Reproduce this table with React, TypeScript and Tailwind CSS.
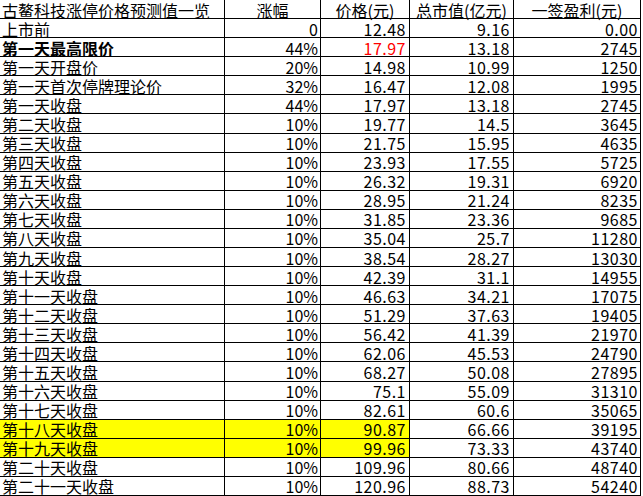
import React from "react";

type Row = {
  name: string;
  pct: string;
  price: string;
  cap: string;
  profit: string;
  bold?: boolean;
  red?: boolean;
  yellow?: boolean;
};

const rows: Row[] = [
  { name: "上市前", pct: "0", price: "12.48", cap: "9.16", profit: "0.00" },
  { name: "第一天最高限价", pct: "44%", price: "17.97", cap: "13.18", profit: "2745", bold: true, red: true },
  { name: "第一天开盘价", pct: "20%", price: "14.98", cap: "10.99", profit: "1250" },
  { name: "第一天首次停牌理论价", pct: "32%", price: "16.47", cap: "12.08", profit: "1995" },
  { name: "第一天收盘", pct: "44%", price: "17.97", cap: "13.18", profit: "2745" },
  { name: "第二天收盘", pct: "10%", price: "19.77", cap: "14.5", profit: "3645" },
  { name: "第三天收盘", pct: "10%", price: "21.75", cap: "15.95", profit: "4635" },
  { name: "第四天收盘", pct: "10%", price: "23.93", cap: "17.55", profit: "5725" },
  { name: "第五天收盘", pct: "10%", price: "26.32", cap: "19.31", profit: "6920" },
  { name: "第六天收盘", pct: "10%", price: "28.95", cap: "21.24", profit: "8235" },
  { name: "第七天收盘", pct: "10%", price: "31.85", cap: "23.36", profit: "9685" },
  { name: "第八天收盘", pct: "10%", price: "35.04", cap: "25.7", profit: "11280" },
  { name: "第九天收盘", pct: "10%", price: "38.54", cap: "28.27", profit: "13030" },
  { name: "第十天收盘", pct: "10%", price: "42.39", cap: "31.1", profit: "14955" },
  { name: "第十一天收盘", pct: "10%", price: "46.63", cap: "34.21", profit: "17075" },
  { name: "第十二天收盘", pct: "10%", price: "51.29", cap: "37.63", profit: "19405" },
  { name: "第十三天收盘", pct: "10%", price: "56.42", cap: "41.39", profit: "21970" },
  { name: "第十四天收盘", pct: "10%", price: "62.06", cap: "45.53", profit: "24790" },
  { name: "第十五天收盘", pct: "10%", price: "68.27", cap: "50.08", profit: "27895" },
  { name: "第十六天收盘", pct: "10%", price: "75.1", cap: "55.09", profit: "31310" },
  { name: "第十七天收盘", pct: "10%", price: "82.61", cap: "60.6", profit: "35065" },
  { name: "第十八天收盘", pct: "10%", price: "90.87", cap: "66.66", profit: "39195", yellow: true },
  { name: "第十九天收盘", pct: "10%", price: "99.96", cap: "73.33", profit: "43740", yellow: true },
  { name: "第二十天收盘", pct: "10%", price: "109.96", cap: "80.66", profit: "48740" },
  { name: "第二十一天收盘", pct: "10%", price: "120.96", cap: "88.73", profit: "54240" },
];

const font = { fontFamily: '"Noto Sans CJK SC", "Noto Sans", sans-serif' };

export default function App() {
  return (
    <div className="w-[643px] h-[496px] bg-white overflow-hidden text-black" style={font}>
      <div className="grid grid-cols-[225px_96px_89px_104px_127px] auto-rows-[19.08px] text-[16px] leading-[16px]">
        <div className="border-b border-r border-black pl-[2px] pt-[1px] flex items-center whitespace-nowrap">古鳌科技涨停价格预测值一览</div>
        <div className="border-b border-r border-black pt-[1px] flex items-center justify-center">涨幅</div>
        <div className="border-b border-r border-black pt-[1px] flex items-center justify-center">价格(元)</div>
        <div className="border-b border-r border-black pt-[1px] flex items-center justify-center">总市值(亿元)</div>
        <div className="border-b border-r border-black pt-[1px] flex items-center justify-center">一签盈利(元)</div>
        {rows.map((r, i) => (
          <React.Fragment key={i}>
            <div
              className={
                "border-b border-r border-black pl-[2px] pt-[1px] flex items-center whitespace-nowrap " +
                (r.yellow ? "bg-[#ffff00] " : "") +
                (r.bold ? "font-bold" : "")
              }
            >
              {r.name}
            </div>
            <div className={"border-b border-r border-black pr-[2px] pt-[1px] flex items-center justify-end " + (r.yellow ? "bg-[#ffff00]" : "")}>
              {r.pct}
            </div>
            <div
              className={
                "border-b border-r border-black pr-[3px] pt-[1px] flex items-center justify-end tracking-[0.5px] " +
                (r.yellow ? "bg-[#ffff00] " : "") +
                (r.red ? "text-[#ff0000]" : "")
              }
            >
              {r.price}
            </div>
            <div className="border-b border-r border-black pr-[3px] pt-[1px] flex items-center justify-end tracking-[0.5px]">{r.cap}</div>
            <div className="border-b border-r border-black pr-[2px] pt-[1px] flex items-center justify-end tracking-[0.5px]">{r.profit}</div>
          </React.Fragment>
        ))}
      </div>
    </div>
  );
}
